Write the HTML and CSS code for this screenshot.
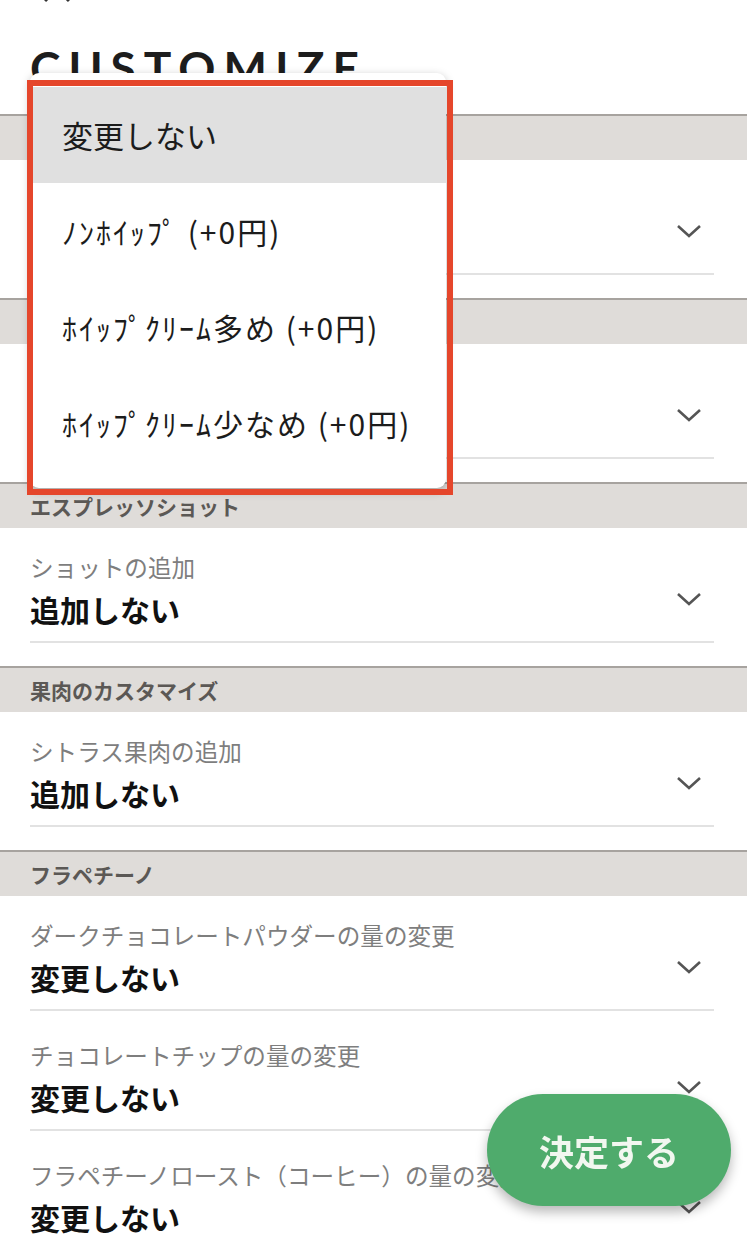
FILE: index.html
```html
<!DOCTYPE html>
<html lang="ja">
<head>
<meta charset="utf-8">
<title>CUSTOMIZE</title>
<link rel="stylesheet" href="styles.css">
</head>
<body>
<div class="page">
  <div class="topbar">
    <svg class="close" width="30" height="30" viewBox="0 0 30 30"><path d="M3 3 L27 27 M27 3 L3 27" stroke="#333" stroke-width="3" fill="none"/></svg>
  </div>
  <div class="titlebar"><h1 class="title">CUSTOMIZE</h1></div>

  <section class="section">
    <div class="sec-head">ホイップクリーム</div>
    <div class="item">
      <div class="text"><div class="label">ホイップクリームの量の変更</div><div class="value">変更しない</div></div>
      <svg class="chev" width="26" height="14" viewBox="0 0 26 14"><path d="M2 2 L13 12 L24 2" stroke="#555" stroke-width="2.6" fill="none"/></svg>
    </div>
  </section>

  <section class="section">
    <div class="sec-head">シロップ</div>
    <div class="item">
      <div class="text"><div class="label">シロップの追加</div><div class="value">追加しない</div></div>
      <svg class="chev" width="26" height="14" viewBox="0 0 26 14"><path d="M2 2 L13 12 L24 2" stroke="#555" stroke-width="2.6" fill="none"/></svg>
    </div>
  </section>

  <section class="section">
    <div class="sec-head">エスプレッソショット</div>
    <div class="item">
      <div class="text"><div class="label">ショットの追加</div><div class="value">追加しない</div></div>
      <svg class="chev" width="26" height="14" viewBox="0 0 26 14"><path d="M2 2 L13 12 L24 2" stroke="#555" stroke-width="2.6" fill="none"/></svg>
    </div>
  </section>

  <section class="section">
    <div class="sec-head">果肉のカスタマイズ</div>
    <div class="item">
      <div class="text"><div class="label">シトラス果肉の追加</div><div class="value">追加しない</div></div>
      <svg class="chev" width="26" height="14" viewBox="0 0 26 14"><path d="M2 2 L13 12 L24 2" stroke="#555" stroke-width="2.6" fill="none"/></svg>
    </div>
  </section>

  <section class="section">
    <div class="sec-head">フラペチーノ</div>
    <div class="item">
      <div class="text"><div class="label">ダークチョコレートパウダーの量の変更</div><div class="value">変更しない</div></div>
      <svg class="chev" width="26" height="14" viewBox="0 0 26 14"><path d="M2 2 L13 12 L24 2" stroke="#555" stroke-width="2.6" fill="none"/></svg>
    </div>
    <div class="item">
      <div class="text"><div class="label">チョコレートチップの量の変更</div><div class="value">変更しない</div></div>
      <svg class="chev" width="26" height="14" viewBox="0 0 26 14"><path d="M2 2 L13 12 L24 2" stroke="#555" stroke-width="2.6" fill="none"/></svg>
    </div>
    <div class="item">
      <div class="text"><div class="label">フラペチーノロースト（コーヒー）の量の変更</div><div class="value">変更しない</div></div>
      <svg class="chev" width="26" height="14" viewBox="0 0 26 14"><path d="M2 2 L13 12 L24 2" stroke="#555" stroke-width="2.6" fill="none"/></svg>
    </div>
  </section>

  <div class="menu">
    <div class="opt selected">変更しない</div>
    <div class="opt hw">ﾉﾝﾎｲｯﾌﾟ (+0円)</div>
    <div class="opt hw">ﾎｲｯﾌﾟｸﾘｰﾑ多め (+0円)</div>
    <div class="opt hw">ﾎｲｯﾌﾟｸﾘｰﾑ少なめ (+0円)</div>
  </div>
  <div class="highlight"></div>

  <button class="confirm">決定する</button>
</div>
</body>
</html>
```

FILE: styles.css
```css
html, body {
  margin: 0;
  padding: 0;
  background: #fff;
  scrollbar-width: none;
}
::-webkit-scrollbar { display: none; }

body {
  font-family: "Noto Sans CJK JP", "Noto Sans", sans-serif;
  color: #111;
}

.page {
  position: relative;
  width: 747px;
}

.topbar {
  height: 4px;
  overflow: hidden;
  display: flex;
  align-items: flex-end;
  padding-left: 42px;
}

.close { flex: none; }

.titlebar {
  height: 110px;
  box-sizing: border-box;
  padding: 41px 0 0 30px;
}

.title {
  margin: 0;
  font-family: "Lato", "Noto Sans", sans-serif;
  font-weight: 700;
  font-size: 46px;
  line-height: 46px;
  letter-spacing: 8px;
  color: #1d1d1d;
}

.section {
  padding-bottom: 23px;
}

.sec-head {
  height: 44px;
  border-top: 2px solid #a7a39f;
  background: #dfdcd9;
  padding-left: 30px;
  font-size: 21px;
  font-weight: 700;
  line-height: 44px;
  color: #5b5855;
}

.item {
  display: flex;
  align-items: center;
  margin: 0 33px 0 30px;
  padding: 24px 0 11px;
  border-bottom: 2px solid #e2e2e2;
}

.item + .item {
  padding-top: 29px;
}

.text {
  flex: 1;
  min-width: 0;
}

.label {
  font-size: 23.6px;
  line-height: 30px;
  color: #7e7e7e;
  white-space: nowrap;
}

.value {
  margin-top: 6px;
  font-size: 30px;
  font-weight: 700;
  line-height: 42px;
  color: #111;
}

.chev {
  flex: none;
  margin: 16px 12px 0 0;
}

.menu {
  position: absolute;
  left: 30px;
  top: 73px;
  width: 416px;
  height: 415px;
  box-sizing: border-box;
  padding-top: 14px;
  background: #fff;
  border-radius: 9px;
  box-shadow: 0 3px 10px rgba(0, 0, 0, 0.28);
  overflow: hidden;
}

.opt {
  height: 96px;
  padding-left: 32px;
  font-size: 31px;
  line-height: 96px;
  color: #1c1c1c;
  white-space: nowrap;
}

.opt.hw {
  font-size: 30px;
  letter-spacing: 2px;
}

.opt.selected {
  background: #e0e0e0;
}

.highlight {
  position: absolute;
  left: 27px;
  top: 80px;
  width: 426px;
  height: 415px;
  box-sizing: border-box;
  border: 6px solid #e5462b;
}

.confirm {
  position: fixed;
  right: 16px;
  bottom: 32px;
  width: 244px;
  height: 112px;
  border: none;
  border-radius: 56px;
  background: #4fab6c;
  box-shadow: 0 6px 12px rgba(0, 0, 0, 0.28);
  font-family: "Noto Sans CJK JP", sans-serif;
  font-size: 35px;
  font-weight: 700;
  color: #f2f7f0;
  letter-spacing: 0;
  padding: 0;
}
```
